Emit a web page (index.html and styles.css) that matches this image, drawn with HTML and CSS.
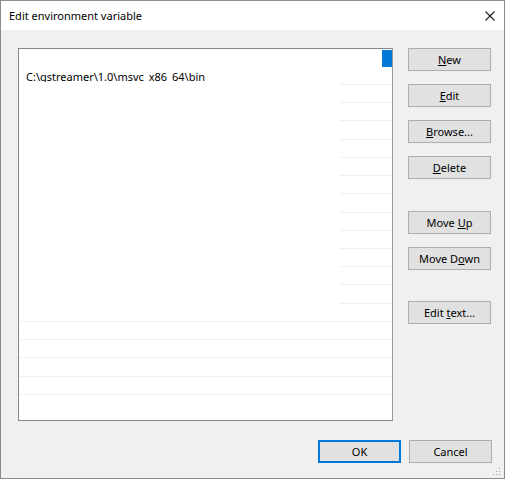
FILE: index.html
```html
<!DOCTYPE html>
<html>
<head>
<meta charset="utf-8">
<link rel="stylesheet" href="styles.css">
</head>
<body>
<div class="window">
  <div class="titlebar">
    <span class="title">Edit environment variable</span>
    <svg class="close" width="10" height="10" viewBox="0 0 10 10"><path d="M0.5 0.5 L9.5 9.5 M9.5 0.5 L0.5 9.5" stroke="#1a1a1a" stroke-width="1.1" fill="none"/></svg>
  </div>
  <div class="content">
    <div class="main">
      <div class="list">
        <div class="row first"><span class="caret"></span></div>
        <div class="row text">C:\gstreamer\1.0\msvc_x86_64\bin</div>
        <div class="row"></div><div class="row"></div><div class="row"></div><div class="row"></div>
        <div class="row"></div><div class="row"></div><div class="row"></div><div class="row"></div>
        <div class="row"></div><div class="row"></div><div class="row"></div><div class="row"></div>
        <div class="row"></div><div class="row"></div><div class="row"></div><div class="row"></div>
        <div class="row"></div>
        <div class="cover"></div>
      </div>
      <div class="buttons">
        <button class="btn"><u>N</u>ew</button>
        <button class="btn"><u>E</u>dit</button>
        <button class="btn"><u>B</u>rowse...</button>
        <button class="btn"><u>D</u>elete</button>
        <button class="btn group">Move <u>U</u>p</button>
        <button class="btn">Move D<u>o</u>wn</button>
        <button class="btn group2">Edit <u>t</u>ext...</button>
      </div>
    </div>
    <div class="footer">
      <button class="btn default">OK</button>
      <button class="btn">Cancel</button>
    </div>
  </div>
  <svg class="grip" width="8" height="8" viewBox="0 0 8 8">
    <rect x="6" y="0" width="1" height="1" fill="#a0a0a0"/>
    <rect x="3" y="3" width="1" height="1" fill="#a0a0a0"/>
    <rect x="6" y="3" width="1" height="1" fill="#a0a0a0"/>
    <rect x="0" y="6" width="1" height="1" fill="#a0a0a0"/>
    <rect x="3" y="6" width="1" height="1" fill="#a0a0a0"/>
    <rect x="6" y="6" width="1" height="1" fill="#a0a0a0"/>
  </svg>
</div>
</body>
</html>
```
FILE: styles.css
```css
html, body {
  margin: 0;
  padding: 0;
  background: #ffffff;
}
body {
  font-family: "Noto Sans", "Segoe UI", sans-serif;
  font-size: 11px;
  color: #000;
}
.window {
  position: relative;
  width: 503px;
  height: 477px;
  border: 1px solid #8c8c8c;
  background: #f0f0f0;
  box-sizing: content-box;
}
.titlebar {
  height: 29px;
  background: #ffffff;
  display: flex;
  align-items: center;
  justify-content: space-between;
  padding: 0 9px 0 8px;
}
.title {
  font-size: 11px;
  line-height: 16px;
}
.close {
  display: block;
}
.content {
  padding: 18px 12px 0 17px;
  display: flex;
  flex-direction: column;
}
.main {
  display: flex;
  gap: 15px;
}
.list {
  position: relative;
  width: 373px;
  height: 371px;
  border: 1px solid #828790;
  border-right-color: #9a9a9a;
  background: #ffffff;
  overflow: hidden;
}
.row {
  height: 18.22px;
  box-sizing: border-box;
  border-bottom: 1px solid #f0f0f0;
}
.row.first {
  height: 18px;
  border-bottom: none;
  position: relative;
}
.row.text {
  height: 18px;
  padding-left: 7px;
  padding-top: 1px;
  line-height: 18px;
  white-space: nowrap;
  font-size: 11px;
}
.caret {
  position: absolute;
  right: 0;
  top: 1px;
  width: 10px;
  height: 17px;
  background: #0078d7;
}
.cover {
  position: absolute;
  left: -1px;
  top: 33px;
  width: 322px;
  height: 239px;
  background: #ffffff;
}
.buttons {
  display: flex;
  flex-direction: column;
  gap: 13px;
  padding-top: 0;
}
.btn {
  width: 83px;
  height: 23px;
  margin: 0;
  padding: 0;
  border: 1px solid #adadad;
  background: #e1e1e1;
  font-family: "Noto Sans", "Segoe UI", sans-serif;
  font-size: 11px;
  color: #000;
  line-height: 20px;
}
.btn u {
  text-decoration: underline;
}
.btn.group {
  margin-top: 19px;
}
.btn.group2 {
  margin-top: 18px;
}
.footer {
  display: flex;
  justify-content: flex-end;
  gap: 8px;
  margin-top: 19px;
}
.btn.default {
  border: 2px solid #0078d7;
  line-height: 18px;
}
.grip {
  position: absolute;
  right: 3px;
  bottom: 2px;
}
```
